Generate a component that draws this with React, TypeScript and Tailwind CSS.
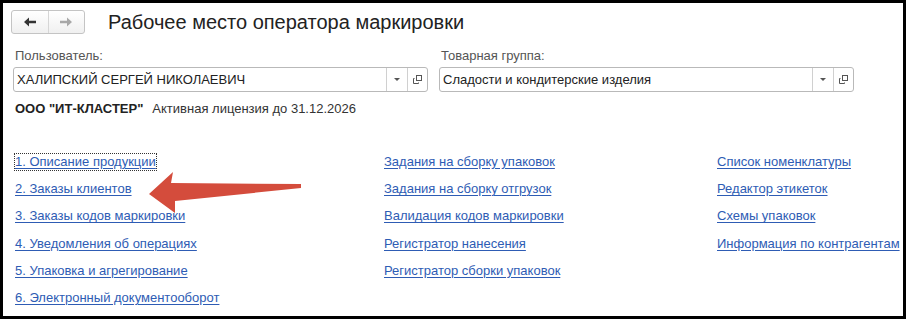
import React from "react";

const col1 = [
  "1. Описание продукции",
  "2. Заказы клиентов",
  "3. Заказы кодов маркировки",
  "4. Уведомления об операциях",
  "5. Упаковка и агрегирование",
  "6. Электронный документооборот",
];
const col2 = [
  "Задания на сборку упаковок",
  "Задания на сборку отгрузок",
  "Валидация кодов маркировки",
  "Регистратор нанесения",
  "Регистратор сборки упаковок",
];
const col3 = [
  "Список номенклатуры",
  "Редактор этикеток",
  "Схемы упаковок",
  "Информация по контрагентам",
];

function OpenIcon() {
  return (
    <svg width="11" height="11" viewBox="0 0 11 11" fill="none" stroke="#555" strokeWidth="1">
      <rect x="4.5" y="1.5" width="5" height="5" />
      <path d="M2.5 4.5 H1.5 V9.5 H6.5 V8.5" />
    </svg>
  );
}

function NavArrow({ dir, color }: { dir: "left" | "right"; color: string }) {
  const d = dir === "left" ? "M0 5 L5 0.5 L5 3.8 L12 3.8 L12 6.2 L5 6.2 L5 9.5 Z" : "M12 5 L7 0.5 L7 3.8 L0 3.8 L0 6.2 L7 6.2 L7 9.5 Z";
  return (
    <svg width="12" height="10" viewBox="0 0 12 10">
      <path d={d} fill={color} />
    </svg>
  );
}

function Field({ label, value }: { label: string; value: string }) {
  return (
    <div className="w-[415px] flex flex-col">
      <div className="pl-[2px] text-[13px] leading-[16px] text-[#555]">{label}</div>
      <div className="mt-[3px] h-[25px] flex border border-[#b9b9b9] rounded-[3px] bg-white">
        <div className="flex-1 pl-[3px] flex items-center text-[13px] text-[#222] truncate">{value}</div>
        <div className="w-[21px] border-l border-[#d0d0d0] flex items-center justify-center">
          <div className="w-0 h-0 border-l-[3px] border-r-[3px] border-t-[3px] border-l-transparent border-r-transparent border-t-[#555]" />
        </div>
        <div className="w-[20px] border-l border-[#d0d0d0] flex items-center justify-center">
          <OpenIcon />
        </div>
      </div>
    </div>
  );
}

function LinkCol({ items, focusFirst }: { items: string[]; focusFirst?: boolean }) {
  return (
    <div className="flex flex-col gap-[11.2px]">
      {items.map((t, i) => (
        <a
          key={t}
          href="#"
          className={
            "self-start h-[16px] leading-[16px] text-[13px] text-[#2e5cb4] underline underline-offset-2 decoration-[#2e5cb4] " +
            (focusFirst && i === 0 ? "outline outline-1 outline-dotted outline-[#333]" : "")
          }
        >
          {t}
        </a>
      ))}
    </div>
  );
}

export default function App() {
  return (
    <div className="w-[908px] h-[322px] bg-white" style={{ fontFamily: '"Liberation Sans", Arial, sans-serif' }}>
      <div className="relative w-[906px] h-[319px] border-[3px] border-black pl-[8px] pt-[7px]">
        <div className="flex items-center">
          <div className="w-[74px] h-[24px] flex border border-[#c4c4c4] rounded-[3px] bg-gradient-to-b from-white to-[#f0f0f0]">
            <div className="flex-1 flex items-center justify-center border-r border-[#d6d6d6]">
              <NavArrow dir="left" color="#333" />
            </div>
            <div className="flex-1 flex items-center justify-center">
              <NavArrow dir="right" color="#a8a8a8" />
            </div>
          </div>
          <h1 className="ml-[23px] text-[20px] leading-[24px] text-[#222]">Рабочее место оператора маркировки</h1>
        </div>

        <div className="mt-[14px] ml-[2px] flex gap-[11px]">
          <Field label="Пользователь:" value="ХАЛИПСКИЙ СЕРГЕЙ НИКОЛАЕВИЧ" />
          <Field label="Товарная группа:" value="Сладости и кондитерские изделия" />
        </div>

        <div className="mt-[9px] ml-[4px] text-[13px] leading-[16px] text-[#222]">
          <span className="font-bold">ООО "ИТ-КЛАСТЕР"</span>
          <span className="ml-[9px] text-[#333]">Активная лицензия до 31.12.2026</span>
        </div>

        <div className="mt-[37px] ml-[4px] flex">
          <div className="w-[369px]">
            <LinkCol items={col1} focusFirst />
          </div>
          <div className="w-[333px]">
            <LinkCol items={col2} />
          </div>
          <LinkCol items={col3} />
        </div>

        <svg className="absolute left-[140px] top-[163px]" width="170" height="50" viewBox="140 163 170 50">
          <path d="M146 191 L170 169 L168 180 L298 181 L298 185 L172 198 L172 210 Z" fill="#d44c3c" />
        </svg>
      </div>
    </div>
  );
}
